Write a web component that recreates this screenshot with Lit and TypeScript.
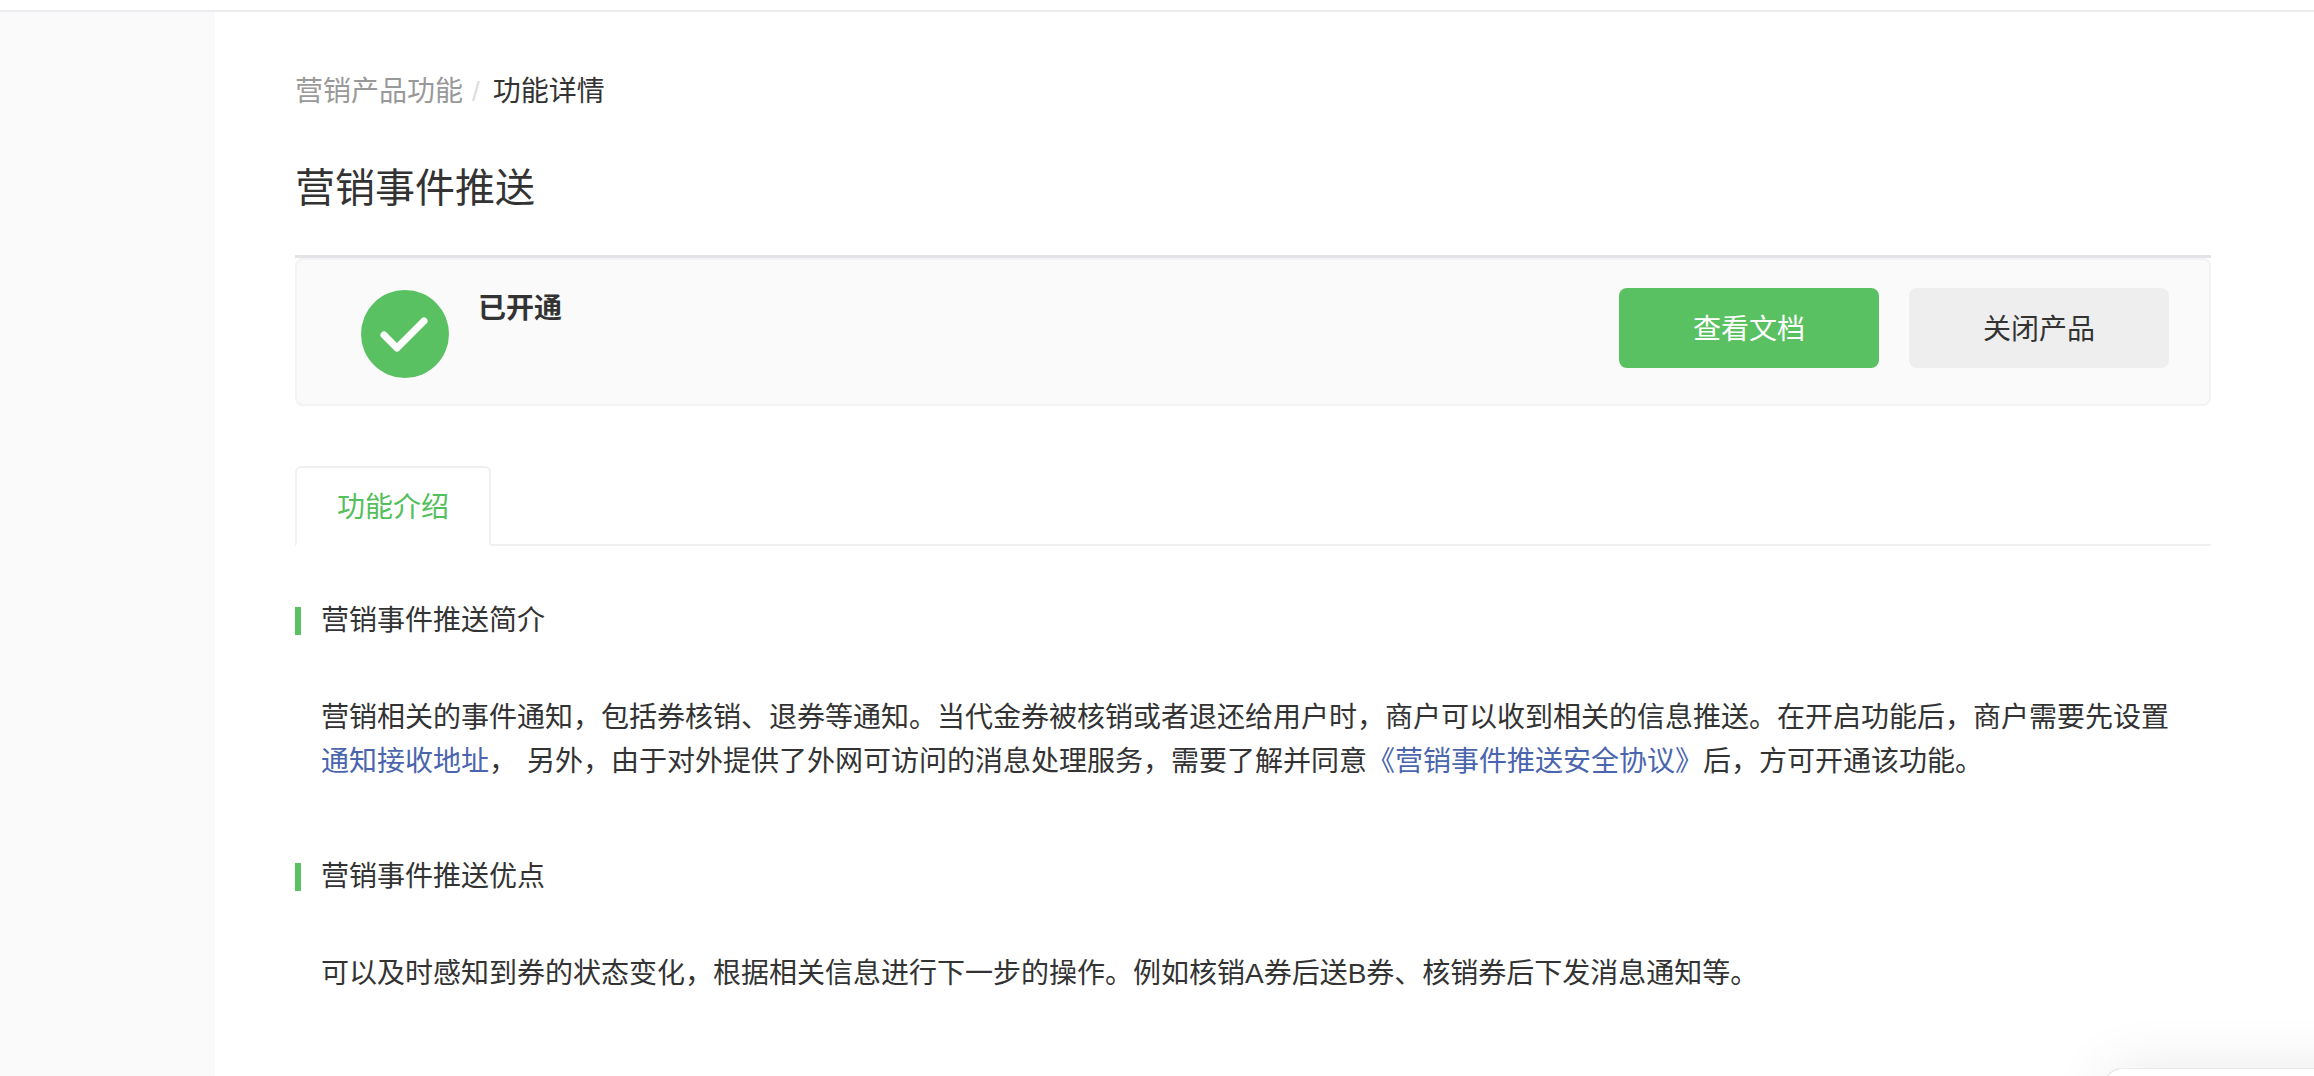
import { LitElement, html, css } from "lit";
import { customElement } from "lit/decorators.js";

@customElement("app-root")
export class AppRoot extends LitElement {
  static styles = css`
    :host {
      display: block;
      position: relative;
      height: 1076px;
      overflow: hidden;
      background: #fff;
      color: #333;
      font-family: "Liberation Sans", "Noto Sans CJK SC", sans-serif;
      font-size: 28px;
    }
    .topbar {
      height: 10px;
      border-bottom: 2px solid #ececf1;
    }
    .layout {
      display: flex;
      height: 1064px;
    }
    .sidebar {
      width: 215px;
      flex: none;
      background: #fafafa;
    }
    .main {
      flex: 1;
      padding: 60px 103px 0 80px;
      min-width: 0;
    }
    .crumbs {
      display: flex;
      line-height: 40px;
      color: #999;
    }
    .crumbs .sep {
      color: #ddd;
      margin: 0 13px 0 9px;
    }
    .crumbs .current {
      color: #333;
    }
    h1 {
      margin: 48px 0 0;
      padding-bottom: 39px;
      border-bottom: 3px solid #e4e4e8;
      font-size: 40px;
      font-weight: 400;
      line-height: 56px;
    }
    .status {
      display: flex;
      align-items: flex-start;
      box-sizing: border-box;
      height: 148px;
      padding: 28px 40px 0 64px;
      border: 2px solid #f3f3f6;
      border-radius: 8px;
      background: #fafafa;
    }
    .status svg {
      flex: none;
      margin: 2px 29px 0 0;
    }
    .status strong {
      margin-top: 1px;
      line-height: 40px;
    }
    .actions {
      display: flex;
      gap: 30px;
      margin-left: auto;
    }
    .btn {
      width: 260px;
      height: 80px;
      border-radius: 8px;
      text-align: center;
      line-height: 84px;
      background: #eee;
    }
    .btn.primary {
      background: #5ac162;
      color: #fff;
    }
    .tabs {
      display: flex;
      margin-top: 60px;
      height: 80px;
      box-sizing: border-box;
      border-bottom: 2px solid #f0f0f0;
    }
    .tab {
      box-sizing: border-box;
      width: 196px;
      height: 80px;
      border: 2px solid #f0f0f0;
      border-bottom: 2px solid #fff;
      border-radius: 6px 6px 0 0;
      text-align: center;
      line-height: 80px;
      color: #53bf5c;
    }
    h2 {
      margin: 61px 0 0;
      padding-left: 20px;
      border-left: 6px solid #5ac162;
      font-size: 28px;
      font-weight: 400;
      line-height: 28px;
    }
    h2.next {
      margin-top: 79px;
    }
    p {
      margin: 61px 0 0;
      padding-left: 26px;
      line-height: 44px;
      white-space: nowrap;
    }
    p a {
      color: #4a65ad;
      text-decoration: none;
    }
    p .gap {
      margin-left: 10px;
    }
    .floating {
      position: absolute;
      left: 2105px;
      top: 1069px;
      width: 300px;
      height: 200px;
      border-radius: 16px;
      background: #fff;
      box-shadow: 0 0 1px rgba(0, 0, 0, 0.4), 0 0 60px rgba(0, 0, 0, 0.09);
    }
  `;

  render() {
    return html`
      <div class="topbar"></div>
      <div class="layout">
        <div class="sidebar"></div>
        <div class="main">
          <div class="crumbs">
            <span>营销产品功能</span><span class="sep">/</span><span class="current">功能详情</span>
          </div>
          <h1>营销事件推送</h1>
          <div class="status">
            <svg width="88" height="88" viewBox="0 0 88 88">
              <circle cx="44" cy="44" r="44" fill="#5ac162" />
              <path d="M23 45 L36 58 L63 31" fill="none" stroke="#fff" stroke-width="7" stroke-linecap="round" stroke-linejoin="round" />
            </svg>
            <strong>已开通</strong>
            <div class="actions">
              <div class="btn primary">查看文档</div>
              <div class="btn">关闭产品</div>
            </div>
          </div>
          <div class="tabs"><div class="tab">功能介绍</div></div>
          <h2>营销事件推送简介</h2>
          <p>
            营销相关的事件通知&#xFF0C;包括券核销、退券等通知。当代金券被核销或者退还给用户时&#xFF0C;商户可以收到相关的信息推送。在开启功能后&#xFF0C;商户需要先设置<br />
            <a href="#">通知接收地址</a>&#xFF0C;<span class="gap">另外</span>&#xFF0C;由于对外提供了外网可访问的消息处理服务&#xFF0C;需要了解并同意<a href="#">《营销事件推送安全协议》</a>后&#xFF0C;方可开通该功能。
          </p>
          <h2 class="next">营销事件推送优点</h2>
          <p>可以及时感知到券的状态变化&#xFF0C;根据相关信息进行下一步的操作。例如核销A券后送B券、核销券后下发消息通知等。</p>
        </div>
      </div>
      <div class="floating"></div>
    `;
  }
}
